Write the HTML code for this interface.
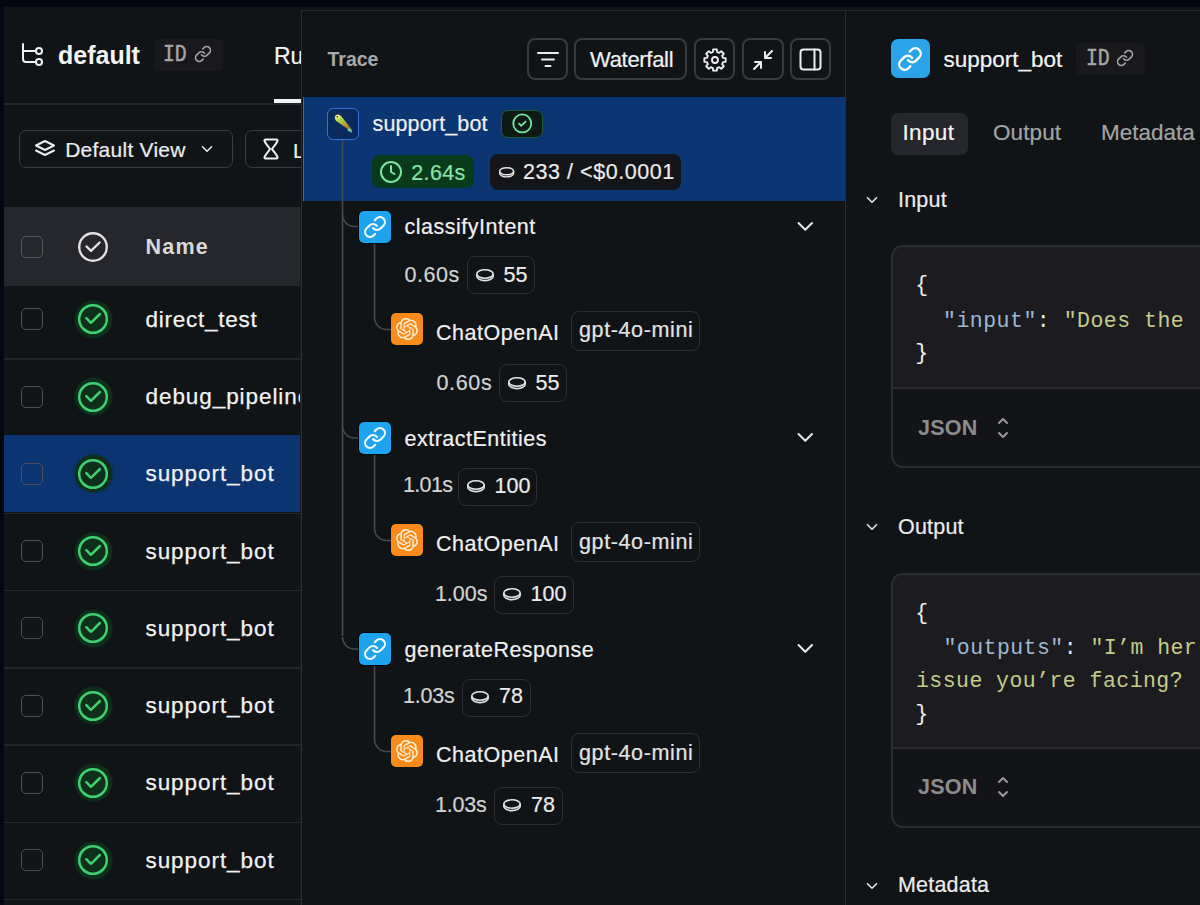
<!DOCTYPE html>
<html><head><meta charset="utf-8">
<style>
*{box-sizing:border-box;margin:0;padding:0}
html,body{width:1200px;height:905px;overflow:hidden;background:#030711;font-family:"Liberation Sans",sans-serif;color:#ececec;position:relative}
.abs{position:absolute}
.t{position:absolute;white-space:nowrap;line-height:1}
svg.abs{overflow:visible}
</style></head><body>
<div class="abs" style="left:4px;top:7px;width:1196px;height:898px;background:#111417"></div>
<svg class="abs" style="left:21px;top:43px;" width="23" height="23" viewBox="0 0 23 23" fill="none"><g stroke="#f0f0f0" stroke-width="2" stroke-linecap="round" stroke-linejoin="round"><path d="M2 1v15a3 3 0 0 0 3 3h10"/><path d="M2 8h13"/><circle cx="18" cy="8" r="3" fill="#111417"/><circle cx="18" cy="19" r="3" fill="#111417"/></g></svg>
<div class="t" style="left:58px;top:42.64px;font-size:25px;color:#f4f4f4;font-weight:bold;font-family:'Liberation Sans',sans-serif;letter-spacing:0px;">default</div>
<div class="abs" style="left:153.5px;top:39px;width:69.5px;height:31.5px;background:#19191d;border-radius:5px"></div>
<div class="t" style="left:163px;top:43.87px;font-size:23px;color:#a6a6a6;font-weight:normal;font-family:'Liberation Mono',monospace;letter-spacing:0px;transform:scaleX(0.86);transform-origin:0 0;-webkit-text-stroke:0.5px #a6a6a6">ID</div>
<svg class="abs" style="left:193.5px;top:45px;" width="18" height="18" viewBox="0 0 24 24" fill="none"><g stroke="#a2a2a2" stroke-width="2.2" stroke-linecap="round" stroke-linejoin="round"><path d="M10 13a5 5 0 0 0 7.54.54l3-3a5 5 0 0 0-7.07-7.07l-1.72 1.71"/><path d="M14 11a5 5 0 0 0-7.54-.54l-3 3a5 5 0 0 0 7.07 7.07l1.71-1.71"/></g></svg>
<div class="t" style="left:274px;top:44.83px;font-size:23px;color:#f4f4f4;font-weight:normal;font-family:'Liberation Sans',sans-serif;letter-spacing:0px;-webkit-text-stroke:0.2px #f4f4f4;">Ru</div>
<div class="abs" style="left:4px;top:103px;width:298px;height:1.5px;background:#23262a"></div>
<div class="abs" style="left:274px;top:99.3px;width:27px;height:3.7px;background:#f2f2f2"></div>
<div class="abs" style="left:19px;top:130px;width:214px;height:38px;border:1.6px solid #393b40;border-radius:7px"></div>
<svg class="abs" style="left:34px;top:138px;" width="22" height="22" viewBox="0 0 22 22" fill="none"><g stroke="#ececec" stroke-width="2" stroke-linecap="round" stroke-linejoin="round"><path d="M11 3 2 7.5 11 12l9-4.5z"/><path d="m2 12.5 9 4.5 9-4.5"/></g></svg>
<div class="t" style="left:65.2px;top:139.22px;font-size:21px;color:#ececec;font-weight:normal;font-family:'Liberation Sans',sans-serif;letter-spacing:0.25px;-webkit-text-stroke:0.2px #ececec;">Default View</div>
<svg class="abs" style="left:198px;top:140px;" width="18" height="18" viewBox="0 0 18 18" fill="none"><g stroke="#ececec" stroke-width="2" stroke-linecap="round" stroke-linejoin="round" transform="scale(0.75)"><path d="m6 9 6 6 6-6"/></g></svg>
<div class="abs" style="left:245px;top:130px;width:80px;height:38px;border:1.6px solid #393b40;border-radius:7px"></div>
<svg class="abs" style="left:262px;top:138px;" width="18" height="22" viewBox="0 0 18 22" fill="none"><g stroke="#f0f0f0" stroke-width="2" stroke-linecap="round" stroke-linejoin="round"><path d="M3.5 1.5h11c.8 0 1.3.8 1 1.5C14 6.5 11 9 10 11c1 2 4 4.5 5.5 8 .3.7-.2 1.5-1 1.5h-11c-.8 0-1.3-.8-1-1.5C4 16 7 13 8 11 7 9 4 6.5 2.5 3c-.3-.7.2-1.5 1-1.5z"/></g></svg>
<div class="t" style="left:293px;top:139.52px;font-size:21px;color:#ececec;font-weight:normal;font-family:'Liberation Sans',sans-serif;letter-spacing:0px;-webkit-text-stroke:0.2px #ececec;">L</div>
<div class="abs" style="left:4px;top:207px;width:298px;height:79px;background:#26272c"></div>
<div class="abs" style="left:21px;top:236px;width:22px;height:22px;border:1.8px solid #55575c;border-radius:5px"></div>
<svg class="abs" style="left:73px;top:227px;" width="40" height="40" viewBox="0 0 40 40" fill="none"><g stroke="#e2e2e2" stroke-width="2.4" stroke-linecap="round" stroke-linejoin="round"><circle cx="20" cy="20" r="13.8"/><path d="M13.5 19.5l4.5 4.3 8.6-8.3"/></g></svg>
<div class="t" style="left:145.5px;top:236.60px;font-size:21.5px;color:#d8d8da;font-weight:bold;font-family:'Liberation Sans',sans-serif;letter-spacing:1.2px;">Name</div>
<div class="abs" style="left:21px;top:308.3px;width:22px;height:22px;border:1.8px solid #4c4e53;border-radius:5px"></div>
<div class="abs" style="left:74.5px;top:300.8px;width:37px;height:37px;background:#0e2f1b;border-radius:50%;box-shadow:0 0 1.5px 0.5px #0e2f1b"></div>
<svg class="abs" style="left:73px;top:299.3px;" width="40" height="40" viewBox="0 0 40 40" fill="none"><g stroke="#3fd072" stroke-width="2.5" stroke-linecap="round" stroke-linejoin="round"><circle cx="20" cy="20" r="13.8"/><path d="M13.3 19.2l4.6 4.6 9-8.8"/></g></svg>
<div class="t" style="left:145.5px;top:308.85px;font-size:22.5px;color:#f2f2f2;font-weight:normal;font-family:'Liberation Sans',sans-serif;letter-spacing:0.75px;-webkit-text-stroke:0.25px #f2f2f2">direct_test</div>
<div class="abs" style="left:4px;top:358.1px;width:298px;height:1.5px;background:#24262b"></div>
<div class="abs" style="left:21px;top:385.55px;width:22px;height:22px;border:1.8px solid #4c4e53;border-radius:5px"></div>
<div class="abs" style="left:74.5px;top:378.05px;width:37px;height:37px;background:#0e2f1b;border-radius:50%;box-shadow:0 0 1.5px 0.5px #0e2f1b"></div>
<svg class="abs" style="left:73px;top:376.55px;" width="40" height="40" viewBox="0 0 40 40" fill="none"><g stroke="#3fd072" stroke-width="2.5" stroke-linecap="round" stroke-linejoin="round"><circle cx="20" cy="20" r="13.8"/><path d="M13.3 19.2l4.6 4.6 9-8.8"/></g></svg>
<div class="t" style="left:145.5px;top:386.10px;font-size:22.5px;color:#f2f2f2;font-weight:normal;font-family:'Liberation Sans',sans-serif;letter-spacing:0.93px;-webkit-text-stroke:0.25px #f2f2f2">debug_pipeline</div>
<div class="abs" style="left:4px;top:435.3px;width:298px;height:1.5px;background:#24262b"></div>
<div class="abs" style="left:4px;top:435px;width:298px;height:77.3px;background:#0b3470"></div>
<div class="abs" style="left:21px;top:462.8px;width:22px;height:22px;border:1.8px solid #4c4e53;border-radius:5px"></div>
<div class="abs" style="left:74.5px;top:455.3px;width:37px;height:37px;background:#0e2f1b;border-radius:50%;box-shadow:0 0 1.5px 0.5px #0e2f1b"></div>
<svg class="abs" style="left:73px;top:453.8px;" width="40" height="40" viewBox="0 0 40 40" fill="none"><g stroke="#3fd072" stroke-width="2.5" stroke-linecap="round" stroke-linejoin="round"><circle cx="20" cy="20" r="13.8"/><path d="M13.3 19.2l4.6 4.6 9-8.8"/></g></svg>
<div class="t" style="left:145.5px;top:463.35px;font-size:22.5px;color:#f2f2f2;font-weight:normal;font-family:'Liberation Sans',sans-serif;letter-spacing:0.93px;-webkit-text-stroke:0.25px #f2f2f2">support_bot</div>
<div class="abs" style="left:4px;top:512.5px;width:298px;height:1.5px;background:#24262b"></div>
<div class="abs" style="left:21px;top:540.05px;width:22px;height:22px;border:1.8px solid #4c4e53;border-radius:5px"></div>
<div class="abs" style="left:74.5px;top:532.55px;width:37px;height:37px;background:#0e2f1b;border-radius:50%;box-shadow:0 0 1.5px 0.5px #0e2f1b"></div>
<svg class="abs" style="left:73px;top:531.05px;" width="40" height="40" viewBox="0 0 40 40" fill="none"><g stroke="#3fd072" stroke-width="2.5" stroke-linecap="round" stroke-linejoin="round"><circle cx="20" cy="20" r="13.8"/><path d="M13.3 19.2l4.6 4.6 9-8.8"/></g></svg>
<div class="t" style="left:145.5px;top:540.60px;font-size:22.5px;color:#f2f2f2;font-weight:normal;font-family:'Liberation Sans',sans-serif;letter-spacing:0.93px;-webkit-text-stroke:0.25px #f2f2f2">support_bot</div>
<div class="abs" style="left:4px;top:589.8px;width:298px;height:1.5px;background:#24262b"></div>
<div class="abs" style="left:21px;top:617.3px;width:22px;height:22px;border:1.8px solid #4c4e53;border-radius:5px"></div>
<div class="abs" style="left:74.5px;top:609.8px;width:37px;height:37px;background:#0e2f1b;border-radius:50%;box-shadow:0 0 1.5px 0.5px #0e2f1b"></div>
<svg class="abs" style="left:73px;top:608.3px;" width="40" height="40" viewBox="0 0 40 40" fill="none"><g stroke="#3fd072" stroke-width="2.5" stroke-linecap="round" stroke-linejoin="round"><circle cx="20" cy="20" r="13.8"/><path d="M13.3 19.2l4.6 4.6 9-8.8"/></g></svg>
<div class="t" style="left:145.5px;top:617.85px;font-size:22.5px;color:#f2f2f2;font-weight:normal;font-family:'Liberation Sans',sans-serif;letter-spacing:0.93px;-webkit-text-stroke:0.25px #f2f2f2">support_bot</div>
<div class="abs" style="left:4px;top:667.0px;width:298px;height:1.5px;background:#24262b"></div>
<div class="abs" style="left:21px;top:694.55px;width:22px;height:22px;border:1.8px solid #4c4e53;border-radius:5px"></div>
<div class="abs" style="left:74.5px;top:687.05px;width:37px;height:37px;background:#0e2f1b;border-radius:50%;box-shadow:0 0 1.5px 0.5px #0e2f1b"></div>
<svg class="abs" style="left:73px;top:685.55px;" width="40" height="40" viewBox="0 0 40 40" fill="none"><g stroke="#3fd072" stroke-width="2.5" stroke-linecap="round" stroke-linejoin="round"><circle cx="20" cy="20" r="13.8"/><path d="M13.3 19.2l4.6 4.6 9-8.8"/></g></svg>
<div class="t" style="left:145.5px;top:695.10px;font-size:22.5px;color:#f2f2f2;font-weight:normal;font-family:'Liberation Sans',sans-serif;letter-spacing:0.93px;-webkit-text-stroke:0.25px #f2f2f2">support_bot</div>
<div class="abs" style="left:4px;top:744.3px;width:298px;height:1.5px;background:#24262b"></div>
<div class="abs" style="left:21px;top:771.8px;width:22px;height:22px;border:1.8px solid #4c4e53;border-radius:5px"></div>
<div class="abs" style="left:74.5px;top:764.3px;width:37px;height:37px;background:#0e2f1b;border-radius:50%;box-shadow:0 0 1.5px 0.5px #0e2f1b"></div>
<svg class="abs" style="left:73px;top:762.8px;" width="40" height="40" viewBox="0 0 40 40" fill="none"><g stroke="#3fd072" stroke-width="2.5" stroke-linecap="round" stroke-linejoin="round"><circle cx="20" cy="20" r="13.8"/><path d="M13.3 19.2l4.6 4.6 9-8.8"/></g></svg>
<div class="t" style="left:145.5px;top:772.35px;font-size:22.5px;color:#f2f2f2;font-weight:normal;font-family:'Liberation Sans',sans-serif;letter-spacing:0.93px;-webkit-text-stroke:0.25px #f2f2f2">support_bot</div>
<div class="abs" style="left:4px;top:821.5px;width:298px;height:1.5px;background:#24262b"></div>
<div class="abs" style="left:21px;top:849.05px;width:22px;height:22px;border:1.8px solid #4c4e53;border-radius:5px"></div>
<div class="abs" style="left:74.5px;top:841.55px;width:37px;height:37px;background:#0e2f1b;border-radius:50%;box-shadow:0 0 1.5px 0.5px #0e2f1b"></div>
<svg class="abs" style="left:73px;top:840.05px;" width="40" height="40" viewBox="0 0 40 40" fill="none"><g stroke="#3fd072" stroke-width="2.5" stroke-linecap="round" stroke-linejoin="round"><circle cx="20" cy="20" r="13.8"/><path d="M13.3 19.2l4.6 4.6 9-8.8"/></g></svg>
<div class="t" style="left:145.5px;top:849.60px;font-size:22.5px;color:#f2f2f2;font-weight:normal;font-family:'Liberation Sans',sans-serif;letter-spacing:0.93px;-webkit-text-stroke:0.25px #f2f2f2">support_bot</div>
<div class="abs" style="left:299.5px;top:207px;width:1.5px;height:698px;background:#1b1d21"></div>
<div class="abs" style="left:4px;top:898.5px;width:298px;height:1.5px;background:#24262b"></div>
<div class="abs" style="left:301px;top:10px;width:899px;height:895px;background:#111417;border-left:1.5px solid #2a2d31;border-top:1.5px solid #25282c"></div>
<div class="abs" style="left:844.5px;top:11px;width:1.5px;height:894px;background:#2a2d31"></div>
<div class="t" style="left:327.5px;top:50.29px;font-size:19.5px;color:#a9a9a9;font-weight:bold;font-family:'Liberation Sans',sans-serif;letter-spacing:0px;">Trace</div>
<div class="abs" style="left:527px;top:38px;width:41px;height:42px;border:2px solid #383a3f;border-radius:8px"></div>
<div class="abs" style="left:574px;top:38px;width:113px;height:42px;border:2px solid #383a3f;border-radius:8px"></div>
<div class="abs" style="left:694px;top:38px;width:41px;height:42px;border:2px solid #383a3f;border-radius:8px"></div>
<div class="abs" style="left:742px;top:38px;width:41.5px;height:42px;border:2px solid #383a3f;border-radius:8px"></div>
<div class="abs" style="left:790px;top:38px;width:41px;height:42px;border:2px solid #383a3f;border-radius:8px"></div>
<svg class="abs" style="left:536px;top:49px;" width="24" height="22" viewBox="0 0 24 22" fill="none"><g stroke="#ececec" stroke-width="2" stroke-linecap="round"><path d="M2 4h20M6 10.5h12M9.5 17h5"/></g></svg>
<div class="t" style="left:590px;top:48.68px;font-size:22px;color:#f0f0f0;font-weight:normal;font-family:'Liberation Sans',sans-serif;letter-spacing:-0.3px;-webkit-text-stroke:0.2px #f0f0f0;">Waterfall</div>
<svg class="abs" style="left:702.5px;top:47.5px;" width="24" height="24" viewBox="0 0 24 24" fill="none"><g stroke="#ececec" stroke-width="1.9" stroke-linecap="round" stroke-linejoin="round"><path d="M20.02 9.87 L22.64 10.17 L22.64 13.83 L20.02 14.13 L19.18 16.16 L20.82 18.23 L18.23 20.82 L16.16 19.18 L14.13 20.02 L13.83 22.64 L10.17 22.64 L9.87 20.02 L7.84 19.18 L5.77 20.82 L3.18 18.23 L4.82 16.16 L3.98 14.13 L1.36 13.83 L1.36 10.17 L3.98 9.87 L4.82 7.84 L3.18 5.77 L5.77 3.18 L7.84 4.82 L9.87 3.98 L10.17 1.36 L13.83 1.36 L14.13 3.98 L16.16 4.82 L18.23 3.18 L20.82 5.77 L19.18 7.84Z"/><circle cx="12" cy="12" r="3"/></g></svg>
<svg class="abs" style="left:750.5px;top:47.5px;" width="24" height="24" viewBox="0 0 24 24" fill="none"><g stroke="#ececec" stroke-width="2" stroke-linecap="round" stroke-linejoin="round"><path d="M4 14h6v6M20 10h-6V4M14 10l7-7M3 21l7-7"/></g></svg>
<svg class="abs" style="left:799px;top:48px;" width="23" height="23" viewBox="0 0 23 23" fill="none"><g stroke="#ececec" stroke-width="2" stroke-linecap="round" stroke-linejoin="round"><rect x="1.5" y="1.5" width="20" height="20" rx="3"/><path d="M15.5 1.5v20"/></g></svg>
<div class="abs" style="left:302.5px;top:97px;width:542px;height:104px;background:#0c3573;border-left:1.5px solid #3a6ac0"></div>
<svg class="abs" style="left:302px;top:140px;" width="100" height="700" viewBox="0 0 100 700" fill="none"><g stroke="#46494e" stroke-width="1.6" fill="none"><path d="M40.5 0V496"/><path d="M40.5 74.5a12 12 0 0 0 12 12h5"/><path d="M40.5 286a12 12 0 0 0 12 12h5"/><path d="M40.5 497a12 12 0 0 0 12 12h5"/></g></svg>
<div class="abs" style="left:327px;top:108px;width:32px;height:32px;background:#0a2a5e;border:1.6px solid #3b70d9;border-radius:6px"></div>
<svg class="abs" style="left:327px;top:108px;" width="32" height="32" viewBox="0 0 32 32" fill="none"><defs><linearGradient id="pg" x1="0" y1="0" x2="1" y2="1"><stop offset="0" stop-color="#d8ef6a"/><stop offset=".35" stop-color="#a6d63c"/><stop offset=".7" stop-color="#b98d2c"/><stop offset=".88" stop-color="#8a6a2a"/><stop offset="1" stop-color="#6fd1b0"/></linearGradient></defs><path d="M8.5 7.5c1.8-1.8 4.3-1 5.6.6l10.2 12.6c.6.8 1 1.7.4 2.1-.6.4-1.4 0-2.1-.5L10 13.5C7.8 12 7 9.2 8.5 7.5z" fill="url(#pg)"/><path d="M21.5 19.5l3.5 4.3c.4.5.1 1-.4.8l-4.3-2.2z" fill="#6fd1b0"/><circle cx="10.6" cy="9" r="2.1" fill="#f0eaa0"/><circle cx="10.3" cy="8.8" r="0.9" fill="#5a4a10"/></svg>
<div class="t" style="left:372.5px;top:113.60px;font-size:21.5px;color:#f0f0f0;font-weight:normal;font-family:'Liberation Sans',sans-serif;letter-spacing:0.15px;-webkit-text-stroke:0.2px #f0f0f0;">support_bot</div>
<div class="abs" style="left:501px;top:109.5px;width:42px;height:28px;background:#0f1a16;border:1.6px solid #1f5a3a;border-radius:7px"></div>
<svg class="abs" style="left:511px;top:112px;" width="22" height="22" viewBox="0 0 22 22" fill="none"><g stroke="#6ee7a0" stroke-width="2" stroke-linecap="round" stroke-linejoin="round" transform="scale(0.9) translate(0.5,0.7)"><circle cx="12" cy="12" r="10"/><path d="m8.5 12.3 2.4 2.4 4.8-4.8"/></g></svg>
<div class="abs" style="left:372px;top:155px;width:102px;height:33px;background:#0a3a1c;border-radius:8px"></div>
<svg class="abs" style="left:379px;top:160px;" width="24" height="24" viewBox="0 0 24 24" fill="none"><g stroke="#7fe3a4" stroke-width="2" stroke-linecap="round" stroke-linejoin="round"><circle cx="12" cy="12" r="10"/><path d="M12 6v6l3.5 2"/></g></svg>
<div class="t" style="left:411.3px;top:162.60px;font-size:21.5px;color:#8ae2a8;font-weight:normal;font-family:'Liberation Sans',sans-serif;letter-spacing:0.35px;-webkit-text-stroke:0.2px #8ae2a8;">2.64s</div>
<div class="abs" style="left:490px;top:154px;width:191px;height:36px;background:#141519;border-radius:8px"></div>
<svg class="abs" style="left:499px;top:167px;" width="16" height="11" viewBox="0 0 16 11" fill="none"><g stroke="#e8e8e8" stroke-width="1.7" stroke-linecap="round" stroke-linejoin="round" transform="scale(0.85)"><ellipse cx="9" cy="5" rx="8.2" ry="4.2"/><path d="M0.8 5.5v1.8c0 2.3 3.7 4.3 8.2 4.3s8.2-2 8.2-4.3V5.5"/></g></svg>
<div class="t" style="left:523px;top:161.60px;font-size:21.5px;color:#ececec;font-weight:normal;font-family:'Liberation Sans',sans-serif;letter-spacing:0.55px;-webkit-text-stroke:0.2px #ececec;">233 / &lt;$0.0001</div>
<svg class="abs" style="left:302px;top:242.5px;" width="100" height="120" viewBox="0 0 100 120" fill="none"><g stroke="#46494e" stroke-width="1.6" fill="none"><path d="M72.5 0V74.5a12 12 0 0 0 12 12h5"/></g></svg>
<div class="abs" style="left:359px;top:210.5px;width:32px;height:32px;background:#1ea3ee;border-radius:5px;box-shadow:0 0 0 1px #05080c"></div>
<svg class="abs" style="left:363px;top:214.5px;" width="24" height="24" viewBox="0 0 24 24" fill="none"><g stroke="#f4fbff" stroke-width="2.1" stroke-linecap="round" stroke-linejoin="round"><path d="M10 13a5 5 0 0 0 7.54.54l3-3a5 5 0 0 0-7.07-7.07l-1.72 1.71"/><path d="M14 11a5 5 0 0 0-7.54-.54l-3 3a5 5 0 0 0 7.07 7.07l1.71-1.71"/></g></svg>
<div class="t" style="left:404.5px;top:217.10px;font-size:21.5px;color:#f0f0f0;font-weight:normal;font-family:'Liberation Sans',sans-serif;letter-spacing:0.5px;-webkit-text-stroke:0.2px #f0f0f0;">classifyIntent</div>
<svg class="abs" style="left:795px;top:217.5px;" width="20" height="16" viewBox="0 0 20 16" fill="none"><path d="M3.5 5l6.8 6.8L17 5" stroke="#e8e8e8" stroke-width="2" stroke-linecap="round" stroke-linejoin="round"/></svg>
<div class="t" style="left:404.5px;top:265.10px;font-size:21.5px;color:#d2d2d2;font-weight:normal;font-family:'Liberation Sans',sans-serif;letter-spacing:0.55px;-webkit-text-stroke:0.2px #d2d2d2;">0.60s</div>
<div class="abs" style="left:466.5px;top:256.0px;width:68.5px;height:38.0px;border:1.5px solid #2c2e33;border-radius:8px"></div>
<svg class="abs" style="left:475.8px;top:268.8px;" width="18" height="13" viewBox="0 0 18 13" fill="none"><g stroke="#e4e4e4" stroke-width="1.6" stroke-linecap="round" stroke-linejoin="round"><ellipse cx="9" cy="5" rx="8.2" ry="4.2"/><path d="M0.8 5.5v1.8c0 2.3 3.7 4.3 8.2 4.3s8.2-2 8.2-4.3V5.5"/></g></svg>
<div class="t" style="left:503.5px;top:265.40px;font-size:21.5px;color:#ececec;font-weight:normal;font-family:'Liberation Sans',sans-serif;letter-spacing:0px;-webkit-text-stroke:0.2px #ececec;">55</div>
<div class="abs" style="left:391px;top:312.5px;width:32px;height:32px;background:#f98b1c;border-radius:5px"></div>
<svg class="abs" style="left:396px;top:317.5px;" width="22" height="22" viewBox="0 0 24 24" fill="none"><path fill="#fff1d8" d="M22.2819 9.8211a5.9847 5.9847 0 0 0-.5157-4.9108 6.0462 6.0462 0 0 0-6.5098-2.9A6.0651 6.0651 0 0 0 4.9807 4.1818a5.9847 5.9847 0 0 0-3.9977 2.9 6.0462 6.0462 0 0 0 .7427 7.0966 5.98 5.98 0 0 0 .511 4.9107 6.051 6.051 0 0 0 6.5146 2.9001A5.9847 5.9847 0 0 0 13.2599 24a6.0557 6.0557 0 0 0 5.7718-4.2058 5.9894 5.9894 0 0 0 3.9977-2.9001 6.0557 6.0557 0 0 0-.7475-7.0729zm-9.022 12.6081a4.4755 4.4755 0 0 1-2.8764-1.0408l.1419-.0804 4.7783-2.7582a.7948.7948 0 0 0 .3927-.6813v-6.7369l2.02 1.1686a.071.071 0 0 1 .038.052v5.5826a4.504 4.504 0 0 1-4.4945 4.4944zm-9.6607-4.1254a4.4708 4.4708 0 0 1-.5346-3.0137l.142.0852 4.783 2.7582a.7712.7712 0 0 0 .7806 0l5.8428-3.3685v2.3324a.0804.0804 0 0 1-.0332.0615L9.74 19.9502a4.4992 4.4992 0 0 1-6.1408-1.6464zM2.3408 7.8956a4.485 4.485 0 0 1 2.3655-1.9728V11.6a.7664.7664 0 0 0 .3879.6765l5.8144 3.3543-2.0201 1.1685a.0757.0757 0 0 1-.071 0l-4.8303-2.7865A4.504 4.504 0 0 1 2.3408 7.872zm16.5963 3.8558L13.1038 8.364 15.1192 7.2a.0757.0757 0 0 1 .071 0l4.8303 2.7913a4.4944 4.4944 0 0 1-.6765 8.1042v-5.6772a.79.79 0 0 0-.407-.667zm2.0107-3.0231l-.142-.0852-4.7735-2.7818a.7759.7759 0 0 0-.7854 0L9.409 9.2297V6.8974a.0662.0662 0 0 1 .0284-.0615l4.8303-2.7866a4.4992 4.4992 0 0 1 6.6802 4.66zM8.3065 12.863l-2.02-1.1638a.0804.0804 0 0 1-.038-.0567V6.0742a4.4992 4.4992 0 0 1 7.3757-3.4537l-.142.0805L8.704 5.459a.7948.7948 0 0 0-.3927.6813zm1.0976-2.3654l2.602-1.4998 2.6069 1.4998v2.9994l-2.5974 1.4997-2.6067-1.4997Z"/></svg>
<div class="t" style="left:436px;top:322.60px;font-size:21.5px;color:#f0f0f0;font-weight:normal;font-family:'Liberation Sans',sans-serif;letter-spacing:0.53px;-webkit-text-stroke:0.2px #f0f0f0;">ChatOpenAI</div>
<div class="abs" style="left:570.5px;top:310.5px;width:129.0px;height:40.0px;border:1.5px solid #2c2e33;border-radius:8px"></div>
<div class="t" style="left:579px;top:320.40px;font-size:21.5px;color:#e4e4e4;font-weight:normal;font-family:'Liberation Sans',sans-serif;letter-spacing:0.62px;-webkit-text-stroke:0.2px #e4e4e4;">gpt-4o-mini</div>
<div class="t" style="left:436.5px;top:373.10px;font-size:21.5px;color:#d2d2d2;font-weight:normal;font-family:'Liberation Sans',sans-serif;letter-spacing:0.65px;-webkit-text-stroke:0.2px #d2d2d2;">0.60s</div>
<div class="abs" style="left:498.5px;top:364.0px;width:68.5px;height:38.0px;border:1.5px solid #2c2e33;border-radius:8px"></div>
<svg class="abs" style="left:507.8px;top:376.8px;" width="18" height="13" viewBox="0 0 18 13" fill="none"><g stroke="#e4e4e4" stroke-width="1.6" stroke-linecap="round" stroke-linejoin="round"><ellipse cx="9" cy="5" rx="8.2" ry="4.2"/><path d="M0.8 5.5v1.8c0 2.3 3.7 4.3 8.2 4.3s8.2-2 8.2-4.3V5.5"/></g></svg>
<div class="t" style="left:535.5px;top:373.30px;font-size:21.5px;color:#ececec;font-weight:normal;font-family:'Liberation Sans',sans-serif;letter-spacing:0px;-webkit-text-stroke:0.2px #ececec;">55</div>
<svg class="abs" style="left:302px;top:454px;" width="100" height="120" viewBox="0 0 100 120" fill="none"><g stroke="#46494e" stroke-width="1.6" fill="none"><path d="M72.5 0V74.5a12 12 0 0 0 12 12h5"/></g></svg>
<div class="abs" style="left:359px;top:422px;width:32px;height:32px;background:#1ea3ee;border-radius:5px;box-shadow:0 0 0 1px #05080c"></div>
<svg class="abs" style="left:363px;top:426px;" width="24" height="24" viewBox="0 0 24 24" fill="none"><g stroke="#f4fbff" stroke-width="2.1" stroke-linecap="round" stroke-linejoin="round"><path d="M10 13a5 5 0 0 0 7.54.54l3-3a5 5 0 0 0-7.07-7.07l-1.72 1.71"/><path d="M14 11a5 5 0 0 0-7.54-.54l-3 3a5 5 0 0 0 7.07 7.07l1.71-1.71"/></g></svg>
<div class="t" style="left:404.5px;top:428.60px;font-size:21.5px;color:#f0f0f0;font-weight:normal;font-family:'Liberation Sans',sans-serif;letter-spacing:0.5px;-webkit-text-stroke:0.2px #f0f0f0;">extractEntities</div>
<svg class="abs" style="left:795px;top:429px;" width="20" height="16" viewBox="0 0 20 16" fill="none"><path d="M3.5 5l6.8 6.8L17 5" stroke="#e8e8e8" stroke-width="2" stroke-linecap="round" stroke-linejoin="round"/></svg>
<div class="t" style="left:402.9px;top:475.20px;font-size:21.5px;color:#d2d2d2;font-weight:normal;font-family:'Liberation Sans',sans-serif;letter-spacing:-0.6px;-webkit-text-stroke:0.2px #d2d2d2;">1.01s</div>
<div class="abs" style="left:457.5px;top:467.5px;width:79.5px;height:38.0px;border:1.5px solid #2c2e33;border-radius:8px"></div>
<svg class="abs" style="left:466.8px;top:480.3px;" width="18" height="13" viewBox="0 0 18 13" fill="none"><g stroke="#e4e4e4" stroke-width="1.6" stroke-linecap="round" stroke-linejoin="round"><ellipse cx="9" cy="5" rx="8.2" ry="4.2"/><path d="M0.8 5.5v1.8c0 2.3 3.7 4.3 8.2 4.3s8.2-2 8.2-4.3V5.5"/></g></svg>
<div class="t" style="left:494.5px;top:475.50px;font-size:21.5px;color:#ececec;font-weight:normal;font-family:'Liberation Sans',sans-serif;letter-spacing:0px;-webkit-text-stroke:0.2px #ececec;">100</div>
<div class="abs" style="left:391px;top:524px;width:32px;height:32px;background:#f98b1c;border-radius:5px"></div>
<svg class="abs" style="left:396px;top:529px;" width="22" height="22" viewBox="0 0 24 24" fill="none"><path fill="#fff1d8" d="M22.2819 9.8211a5.9847 5.9847 0 0 0-.5157-4.9108 6.0462 6.0462 0 0 0-6.5098-2.9A6.0651 6.0651 0 0 0 4.9807 4.1818a5.9847 5.9847 0 0 0-3.9977 2.9 6.0462 6.0462 0 0 0 .7427 7.0966 5.98 5.98 0 0 0 .511 4.9107 6.051 6.051 0 0 0 6.5146 2.9001A5.9847 5.9847 0 0 0 13.2599 24a6.0557 6.0557 0 0 0 5.7718-4.2058 5.9894 5.9894 0 0 0 3.9977-2.9001 6.0557 6.0557 0 0 0-.7475-7.0729zm-9.022 12.6081a4.4755 4.4755 0 0 1-2.8764-1.0408l.1419-.0804 4.7783-2.7582a.7948.7948 0 0 0 .3927-.6813v-6.7369l2.02 1.1686a.071.071 0 0 1 .038.052v5.5826a4.504 4.504 0 0 1-4.4945 4.4944zm-9.6607-4.1254a4.4708 4.4708 0 0 1-.5346-3.0137l.142.0852 4.783 2.7582a.7712.7712 0 0 0 .7806 0l5.8428-3.3685v2.3324a.0804.0804 0 0 1-.0332.0615L9.74 19.9502a4.4992 4.4992 0 0 1-6.1408-1.6464zM2.3408 7.8956a4.485 4.485 0 0 1 2.3655-1.9728V11.6a.7664.7664 0 0 0 .3879.6765l5.8144 3.3543-2.0201 1.1685a.0757.0757 0 0 1-.071 0l-4.8303-2.7865A4.504 4.504 0 0 1 2.3408 7.872zm16.5963 3.8558L13.1038 8.364 15.1192 7.2a.0757.0757 0 0 1 .071 0l4.8303 2.7913a4.4944 4.4944 0 0 1-.6765 8.1042v-5.6772a.79.79 0 0 0-.407-.667zm2.0107-3.0231l-.142-.0852-4.7735-2.7818a.7759.7759 0 0 0-.7854 0L9.409 9.2297V6.8974a.0662.0662 0 0 1 .0284-.0615l4.8303-2.7866a4.4992 4.4992 0 0 1 6.6802 4.66zM8.3065 12.863l-2.02-1.1638a.0804.0804 0 0 1-.038-.0567V6.0742a4.4992 4.4992 0 0 1 7.3757-3.4537l-.142.0805L8.704 5.459a.7948.7948 0 0 0-.3927.6813zm1.0976-2.3654l2.602-1.4998 2.6069 1.4998v2.9994l-2.5974 1.4997-2.6067-1.4997Z"/></svg>
<div class="t" style="left:436px;top:534.10px;font-size:21.5px;color:#f0f0f0;font-weight:normal;font-family:'Liberation Sans',sans-serif;letter-spacing:0.53px;-webkit-text-stroke:0.2px #f0f0f0;">ChatOpenAI</div>
<div class="abs" style="left:570.5px;top:522px;width:129.0px;height:40px;border:1.5px solid #2c2e33;border-radius:8px"></div>
<div class="t" style="left:579px;top:531.90px;font-size:21.5px;color:#e4e4e4;font-weight:normal;font-family:'Liberation Sans',sans-serif;letter-spacing:0.62px;-webkit-text-stroke:0.2px #e4e4e4;">gpt-4o-mini</div>
<div class="t" style="left:434.9px;top:583.90px;font-size:21.5px;color:#d2d2d2;font-weight:normal;font-family:'Liberation Sans',sans-serif;letter-spacing:0px;-webkit-text-stroke:0.2px #d2d2d2;">1.00s</div>
<div class="abs" style="left:493.5px;top:575.5px;width:80.0px;height:38.0px;border:1.5px solid #2c2e33;border-radius:8px"></div>
<svg class="abs" style="left:502.8px;top:588.3px;" width="18" height="13" viewBox="0 0 18 13" fill="none"><g stroke="#e4e4e4" stroke-width="1.6" stroke-linecap="round" stroke-linejoin="round"><ellipse cx="9" cy="5" rx="8.2" ry="4.2"/><path d="M0.8 5.5v1.8c0 2.3 3.7 4.3 8.2 4.3s8.2-2 8.2-4.3V5.5"/></g></svg>
<div class="t" style="left:530.5px;top:584.10px;font-size:21.5px;color:#ececec;font-weight:normal;font-family:'Liberation Sans',sans-serif;letter-spacing:0px;-webkit-text-stroke:0.2px #ececec;">100</div>
<svg class="abs" style="left:302px;top:665px;" width="100" height="120" viewBox="0 0 100 120" fill="none"><g stroke="#46494e" stroke-width="1.6" fill="none"><path d="M72.5 0V74.5a12 12 0 0 0 12 12h5"/></g></svg>
<div class="abs" style="left:359px;top:633px;width:32px;height:32px;background:#1ea3ee;border-radius:5px;box-shadow:0 0 0 1px #05080c"></div>
<svg class="abs" style="left:363px;top:637px;" width="24" height="24" viewBox="0 0 24 24" fill="none"><g stroke="#f4fbff" stroke-width="2.1" stroke-linecap="round" stroke-linejoin="round"><path d="M10 13a5 5 0 0 0 7.54.54l3-3a5 5 0 0 0-7.07-7.07l-1.72 1.71"/><path d="M14 11a5 5 0 0 0-7.54-.54l-3 3a5 5 0 0 0 7.07 7.07l1.71-1.71"/></g></svg>
<div class="t" style="left:404.5px;top:639.60px;font-size:21.5px;color:#f0f0f0;font-weight:normal;font-family:'Liberation Sans',sans-serif;letter-spacing:0.5px;-webkit-text-stroke:0.2px #f0f0f0;">generateResponse</div>
<svg class="abs" style="left:795px;top:640px;" width="20" height="16" viewBox="0 0 20 16" fill="none"><path d="M3.5 5l6.8 6.8L17 5" stroke="#e8e8e8" stroke-width="2" stroke-linecap="round" stroke-linejoin="round"/></svg>
<div class="t" style="left:402.9px;top:685.60px;font-size:21.5px;color:#d2d2d2;font-weight:normal;font-family:'Liberation Sans',sans-serif;letter-spacing:-0.2px;-webkit-text-stroke:0.2px #d2d2d2;">1.03s</div>
<div class="abs" style="left:462px;top:678.5px;width:69px;height:38.0px;border:1.5px solid #2c2e33;border-radius:8px"></div>
<svg class="abs" style="left:471.3px;top:691.3px;" width="18" height="13" viewBox="0 0 18 13" fill="none"><g stroke="#e4e4e4" stroke-width="1.6" stroke-linecap="round" stroke-linejoin="round"><ellipse cx="9" cy="5" rx="8.2" ry="4.2"/><path d="M0.8 5.5v1.8c0 2.3 3.7 4.3 8.2 4.3s8.2-2 8.2-4.3V5.5"/></g></svg>
<div class="t" style="left:499px;top:685.90px;font-size:21.5px;color:#ececec;font-weight:normal;font-family:'Liberation Sans',sans-serif;letter-spacing:0px;-webkit-text-stroke:0.2px #ececec;">78</div>
<div class="abs" style="left:391px;top:735px;width:32px;height:32px;background:#f98b1c;border-radius:5px"></div>
<svg class="abs" style="left:396px;top:740px;" width="22" height="22" viewBox="0 0 24 24" fill="none"><path fill="#fff1d8" d="M22.2819 9.8211a5.9847 5.9847 0 0 0-.5157-4.9108 6.0462 6.0462 0 0 0-6.5098-2.9A6.0651 6.0651 0 0 0 4.9807 4.1818a5.9847 5.9847 0 0 0-3.9977 2.9 6.0462 6.0462 0 0 0 .7427 7.0966 5.98 5.98 0 0 0 .511 4.9107 6.051 6.051 0 0 0 6.5146 2.9001A5.9847 5.9847 0 0 0 13.2599 24a6.0557 6.0557 0 0 0 5.7718-4.2058 5.9894 5.9894 0 0 0 3.9977-2.9001 6.0557 6.0557 0 0 0-.7475-7.0729zm-9.022 12.6081a4.4755 4.4755 0 0 1-2.8764-1.0408l.1419-.0804 4.7783-2.7582a.7948.7948 0 0 0 .3927-.6813v-6.7369l2.02 1.1686a.071.071 0 0 1 .038.052v5.5826a4.504 4.504 0 0 1-4.4945 4.4944zm-9.6607-4.1254a4.4708 4.4708 0 0 1-.5346-3.0137l.142.0852 4.783 2.7582a.7712.7712 0 0 0 .7806 0l5.8428-3.3685v2.3324a.0804.0804 0 0 1-.0332.0615L9.74 19.9502a4.4992 4.4992 0 0 1-6.1408-1.6464zM2.3408 7.8956a4.485 4.485 0 0 1 2.3655-1.9728V11.6a.7664.7664 0 0 0 .3879.6765l5.8144 3.3543-2.0201 1.1685a.0757.0757 0 0 1-.071 0l-4.8303-2.7865A4.504 4.504 0 0 1 2.3408 7.872zm16.5963 3.8558L13.1038 8.364 15.1192 7.2a.0757.0757 0 0 1 .071 0l4.8303 2.7913a4.4944 4.4944 0 0 1-.6765 8.1042v-5.6772a.79.79 0 0 0-.407-.667zm2.0107-3.0231l-.142-.0852-4.7735-2.7818a.7759.7759 0 0 0-.7854 0L9.409 9.2297V6.8974a.0662.0662 0 0 1 .0284-.0615l4.8303-2.7866a4.4992 4.4992 0 0 1 6.6802 4.66zM8.3065 12.863l-2.02-1.1638a.0804.0804 0 0 1-.038-.0567V6.0742a4.4992 4.4992 0 0 1 7.3757-3.4537l-.142.0805L8.704 5.459a.7948.7948 0 0 0-.3927.6813zm1.0976-2.3654l2.602-1.4998 2.6069 1.4998v2.9994l-2.5974 1.4997-2.6067-1.4997Z"/></svg>
<div class="t" style="left:436px;top:745.10px;font-size:21.5px;color:#f0f0f0;font-weight:normal;font-family:'Liberation Sans',sans-serif;letter-spacing:0.53px;-webkit-text-stroke:0.2px #f0f0f0;">ChatOpenAI</div>
<div class="abs" style="left:570.5px;top:733px;width:129.0px;height:40px;border:1.5px solid #2c2e33;border-radius:8px"></div>
<div class="t" style="left:579px;top:742.90px;font-size:21.5px;color:#e4e4e4;font-weight:normal;font-family:'Liberation Sans',sans-serif;letter-spacing:0.62px;-webkit-text-stroke:0.2px #e4e4e4;">gpt-4o-mini</div>
<div class="t" style="left:434.9px;top:794.60px;font-size:21.5px;color:#d2d2d2;font-weight:normal;font-family:'Liberation Sans',sans-serif;letter-spacing:-0.2px;-webkit-text-stroke:0.2px #d2d2d2;">1.03s</div>
<div class="abs" style="left:494px;top:786.5px;width:69px;height:38.0px;border:1.5px solid #2c2e33;border-radius:8px"></div>
<svg class="abs" style="left:503.3px;top:799.3px;" width="18" height="13" viewBox="0 0 18 13" fill="none"><g stroke="#e4e4e4" stroke-width="1.6" stroke-linecap="round" stroke-linejoin="round"><ellipse cx="9" cy="5" rx="8.2" ry="4.2"/><path d="M0.8 5.5v1.8c0 2.3 3.7 4.3 8.2 4.3s8.2-2 8.2-4.3V5.5"/></g></svg>
<div class="t" style="left:531px;top:794.80px;font-size:21.5px;color:#ececec;font-weight:normal;font-family:'Liberation Sans',sans-serif;letter-spacing:0px;-webkit-text-stroke:0.2px #ececec;">78</div>
<div class="abs" style="left:890.5px;top:39px;width:39px;height:39px;background:#2aa3e8;border-radius:7px"></div>
<svg class="abs" style="left:897px;top:45.5px;" width="26" height="26" viewBox="0 0 26 26" fill="none"><g stroke="#ffffff" stroke-width="2.2" stroke-linecap="round" stroke-linejoin="round" transform="scale(1.083)"><path d="M10 13a5 5 0 0 0 7.54.54l3-3a5 5 0 0 0-7.07-7.07l-1.72 1.71"/><path d="M14 11a5 5 0 0 0-7.54-.54l-3 3a5 5 0 0 0 7.07 7.07l1.71-1.71"/></g></svg>
<div class="t" style="left:943.5px;top:48.75px;font-size:22.5px;color:#f4f4f4;font-weight:normal;font-family:'Liberation Sans',sans-serif;letter-spacing:0px;-webkit-text-stroke:0.2px #f4f4f4;">support_bot</div>
<div class="abs" style="left:1076px;top:43px;width:69px;height:31.5px;background:#19191d;border-radius:5px"></div>
<div class="t" style="left:1085.5px;top:47.87px;font-size:23px;color:#a6a6a6;font-weight:normal;font-family:'Liberation Mono',monospace;letter-spacing:0px;transform:scaleX(0.86);transform-origin:0 0;-webkit-text-stroke:0.5px #a6a6a6">ID</div>
<svg class="abs" style="left:1116px;top:49px;" width="18" height="18" viewBox="0 0 24 24" fill="none"><g stroke="#a2a2a2" stroke-width="2.2" stroke-linecap="round" stroke-linejoin="round"><path d="M10 13a5 5 0 0 0 7.54.54l3-3a5 5 0 0 0-7.07-7.07l-1.72 1.71"/><path d="M14 11a5 5 0 0 0-7.54-.54l-3 3a5 5 0 0 0 7.07 7.07l1.71-1.71"/></g></svg>
<div class="abs" style="left:890.5px;top:113px;width:77px;height:42px;background:#25262b;border-radius:7px"></div>
<div class="t" style="left:902.5px;top:121.75px;font-size:22.5px;color:#f4f4f4;font-weight:normal;font-family:'Liberation Sans',sans-serif;letter-spacing:0.35px;-webkit-text-stroke:0.2px #f4f4f4;">Input</div>
<div class="t" style="left:993px;top:121.75px;font-size:22.5px;color:#a4a4a4;font-weight:normal;font-family:'Liberation Sans',sans-serif;letter-spacing:0.1px;-webkit-text-stroke:0.2px #a4a4a4;">Output</div>
<div class="t" style="left:1101px;top:121.75px;font-size:22.5px;color:#a4a4a4;font-weight:normal;font-family:'Liberation Sans',sans-serif;letter-spacing:0px;-webkit-text-stroke:0.2px #a4a4a4;">Metadata</div>
<svg class="abs" style="left:862.5px;top:190.5px;" width="18" height="18" viewBox="0 0 18 18" fill="none"><g stroke="#e0e0e0" stroke-width="2.2" stroke-linecap="round" stroke-linejoin="round" transform="scale(0.75)"><path d="m6 9 6 6 6-6"/></g></svg>
<div class="t" style="left:898px;top:189.60px;font-size:21.5px;color:#ececec;font-weight:normal;font-family:'Liberation Sans',sans-serif;letter-spacing:0.2px;-webkit-text-stroke:0.2px #ececec;">Input</div>
<div class="abs" style="left:890.5px;top:244.5px;width:330px;height:223px;background:#121418;border:2px solid #2a2c31;border-radius:12px;overflow:hidden"></div>
<div class="abs" style="left:892.5px;top:246.5px;width:328px;height:142.5px;background:#1c1c20;border-bottom:2px solid #2a2c31;border-top-left-radius:10px"></div>
<div class="t" style="left:915.3px;top:275.02px;font-size:21.5px;color:#f0f0f0;font-weight:normal;font-family:'Liberation Mono',monospace;letter-spacing:0px;">{</div>
<div class="t" style="left:943px;top:310.52px;font-size:21.5px;color:#e8e8e8;font-weight:normal;font-family:'Liberation Mono',monospace;letter-spacing:0.5px;"><span style="color:#9cb8d4">"input"</span>: <span style="color:#c6cb8a">"Does the</span></div>
<div class="t" style="left:915.3px;top:342.52px;font-size:21.5px;color:#f0f0f0;font-weight:normal;font-family:'Liberation Mono',monospace;letter-spacing:0px;">}</div>
<div class="t" style="left:918px;top:417.60px;font-size:21.5px;color:#8c8c8c;font-weight:bold;font-family:'Liberation Sans',sans-serif;letter-spacing:0.25px;">JSON</div>
<svg class="abs" style="left:994px;top:416px;" width="18" height="24" viewBox="0 0 18 24" fill="none"><g stroke="#9a9a9a" stroke-width="2" stroke-linecap="round" stroke-linejoin="round"><path d="m5 7 4-4 4 4M5 17l4 4 4-4"/></g></svg>
<svg class="abs" style="left:862.5px;top:517.5px;" width="18" height="18" viewBox="0 0 18 18" fill="none"><g stroke="#e0e0e0" stroke-width="2.2" stroke-linecap="round" stroke-linejoin="round" transform="scale(0.75)"><path d="m6 9 6 6 6-6"/></g></svg>
<div class="t" style="left:898px;top:517.40px;font-size:21.5px;color:#ececec;font-weight:normal;font-family:'Liberation Sans',sans-serif;letter-spacing:0.2px;-webkit-text-stroke:0.2px #ececec;">Output</div>
<div class="abs" style="left:890.5px;top:572.5px;width:330px;height:255px;background:#121418;border:2px solid #2a2c31;border-radius:12px;overflow:hidden"></div>
<div class="abs" style="left:892.5px;top:574.5px;width:328px;height:174.5px;background:#1c1c20;border-bottom:2px solid #2a2c31;border-top-left-radius:10px"></div>
<div class="t" style="left:915.3px;top:602.52px;font-size:21.5px;color:#f0f0f0;font-weight:normal;font-family:'Liberation Mono',monospace;letter-spacing:0px;">{</div>
<div class="t" style="left:943.5px;top:637.52px;font-size:21.5px;color:#e8e8e8;font-weight:normal;font-family:'Liberation Mono',monospace;letter-spacing:0.45px;"><span style="color:#9cb8d4">"outputs"</span>: <span style="color:#c6cb8a">"I’m her</span></div>
<div class="t" style="left:916px;top:670.52px;font-size:21.5px;color:#c6cb8a;font-weight:normal;font-family:'Liberation Mono',monospace;letter-spacing:0.45px;">issue you’re facing?</div>
<div class="t" style="left:915.3px;top:703.52px;font-size:21.5px;color:#f0f0f0;font-weight:normal;font-family:'Liberation Mono',monospace;letter-spacing:0px;">}</div>
<div class="t" style="left:918px;top:776.60px;font-size:21.5px;color:#8c8c8c;font-weight:bold;font-family:'Liberation Sans',sans-serif;letter-spacing:0.25px;">JSON</div>
<svg class="abs" style="left:994px;top:775px;" width="18" height="24" viewBox="0 0 18 24" fill="none"><g stroke="#9a9a9a" stroke-width="2" stroke-linecap="round" stroke-linejoin="round"><path d="m5 7 4-4 4 4M5 17l4 4 4-4"/></g></svg>
<svg class="abs" style="left:862.5px;top:876.5px;" width="18" height="18" viewBox="0 0 18 18" fill="none"><g stroke="#e0e0e0" stroke-width="2.2" stroke-linecap="round" stroke-linejoin="round" transform="scale(0.75)"><path d="m6 9 6 6 6-6"/></g></svg>
<div class="t" style="left:898px;top:875.20px;font-size:21.5px;color:#ececec;font-weight:normal;font-family:'Liberation Sans',sans-serif;letter-spacing:0.2px;-webkit-text-stroke:0.2px #ececec;">Metadata</div>
</body></html>
